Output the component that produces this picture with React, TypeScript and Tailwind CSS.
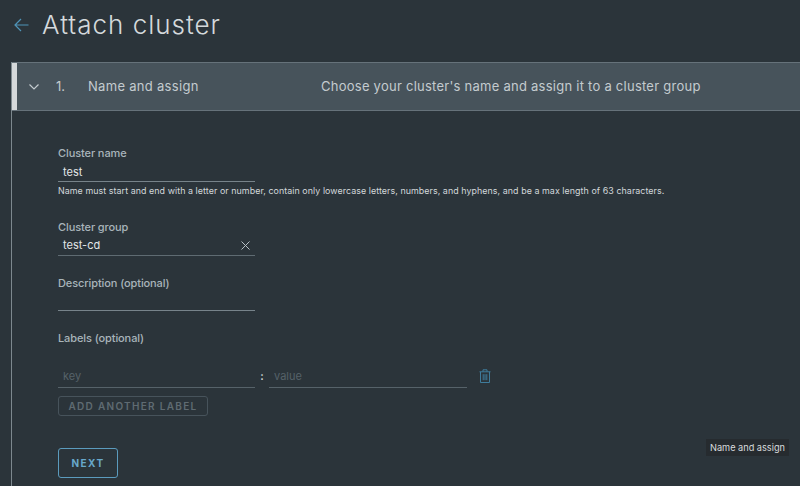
import React from "react";

function Label({ children }: { children: React.ReactNode }) {
  return <div className="text-[11px] leading-[14px] font-medium text-[#a9b4ba] tracking-[-0.1px]">{children}</div>;
}

export default function App() {
  return (
    <div className="relative flex h-[486px] w-[800px] flex-col overflow-hidden bg-[#2b343a] font-['Inter',sans-serif]">
      <header className="flex h-[62px] shrink-0 items-center pb-[13px] pl-[14px]">
        <svg width="15" height="14" viewBox="0 0 15 14" fill="none" stroke="#4f94b8" strokeWidth="1.2">
          <path d="M14.5 7H1M7 1 1 7l6 6" />
        </svg>
        <h1 className="ml-[13px] text-[26px] leading-[30px] font-light tracking-[1px] text-[#d4d9dc]">Attach cluster</h1>
      </header>

      <main className="ml-[11px] flex flex-1 flex-col border-l border-[#7d888e]">
        <div className="flex h-[49px] shrink-0 items-center border-y border-[#66727a] bg-[#47535b]">
          <div className="h-full w-[5px] bg-[#d5d8da]" />
          <svg className="ml-[12px]" width="10" height="6" viewBox="0 0 10 6" fill="none" stroke="#c4cbcf" strokeWidth="1.2">
            <path d="M.5.5 5 5 9.500.5" />
          </svg>
          <span className="ml-[17px] w-[32px] text-[13px] text-[#c4cbcf]">1.</span>
          <span className="w-[233px] text-[13px] tracking-[0.3px] text-[#c4cbcf]">Name and assign</span>
          <span className="text-[13px] tracking-[0.25px] text-[#c4cbcf]">Choose your cluster's name and assign it to a cluster group</span>
        </div>

        <form className="flex flex-col pl-[46px] pt-[35px]">
          <Label>Cluster name</Label>
          <div className="mt-[4px] h-[18px] w-[197px] border-b border-[#77838a] pl-[5px] text-[11px] leading-[16px] text-[#e3e6e8]">test</div>
          <p className="mt-[3px] text-[8.9px] leading-[12px] whitespace-nowrap tracking-[0.06px] text-[#d3d8db]">
            Name must start and end with a letter or number, contain only lowercase letters, numbers, and hyphens, and be a max length of 63 characters.
          </p>

          <div className="mt-[23px]"><Label>Cluster group</Label></div>
          <div className="mt-[3px] flex h-[19px] w-[197px] items-center justify-between border-b border-[#5f6b72] pb-[2px] pl-[5px] pr-[5px] text-[11px] text-[#e3e6e8]">
            <span>test-cd</span>
            <svg width="9" height="9" viewBox="0 0 9 9" fill="none" stroke="#b7c0c5" strokeWidth="1">
              <path d="m.5.5 8 8M8.500.5l-8 8" />
            </svg>
          </div>

          <div className="mt-[20px]"><Label>Description (optional)</Label></div>
          <div className="mt-[3px] h-[18px] w-[197px] border-b border-[#77838a]" />

          <div className="mt-[20px]"><Label>Labels (optional)</Label></div>

          <div className="mt-[23px] flex items-start">
            <div className="h-[20px] w-[197px] border-b border-[#566269] pl-[5px] text-[11px] leading-[16px] text-[#566269]">key</div>
            <span className="w-[14px] text-center text-[11px] leading-[16px] font-semibold text-[#d3d8db]">:</span>
            <div className="h-[20px] w-[198px] border-b border-[#566269] pl-[5px] text-[11px] leading-[16px] text-[#566269]">value</div>
            <svg className="ml-[12px] mt-[1px]" width="12" height="14" viewBox="0 0 12 14" fill="none" stroke="#3f7c9c" strokeWidth="1">
              <path d="M.5 2.800h11M4 2.800V.800h4v2M1.500 2.800v10.700h9V2.800M4.200 5.200v6M6 5.200v6M7.800 5.200v6" />
            </svg>
          </div>

          <button type="button" className="mt-[8px] h-[20px] w-[150px] rounded-[3px] border border-[#47535b] text-[10px] font-semibold tracking-[1.3px] text-[#5f6b72]">
            ADD ANOTHER LABEL
          </button>

          <button type="button" className="mt-[32px] h-[30px] w-[60px] rounded-[3px] border border-[#5b9bbd] text-[10px] font-bold tracking-[1.4px] text-[#68a8cb]">
            NEXT
          </button>
        </form>
      </main>

      <div className="absolute left-[706px] top-[439px] bg-[#262b2f] px-[4px] py-[2px] text-[9.2px] leading-[13px] whitespace-nowrap text-[#d8dcde]">
        Name and assign
      </div>
    </div>
  );
}
